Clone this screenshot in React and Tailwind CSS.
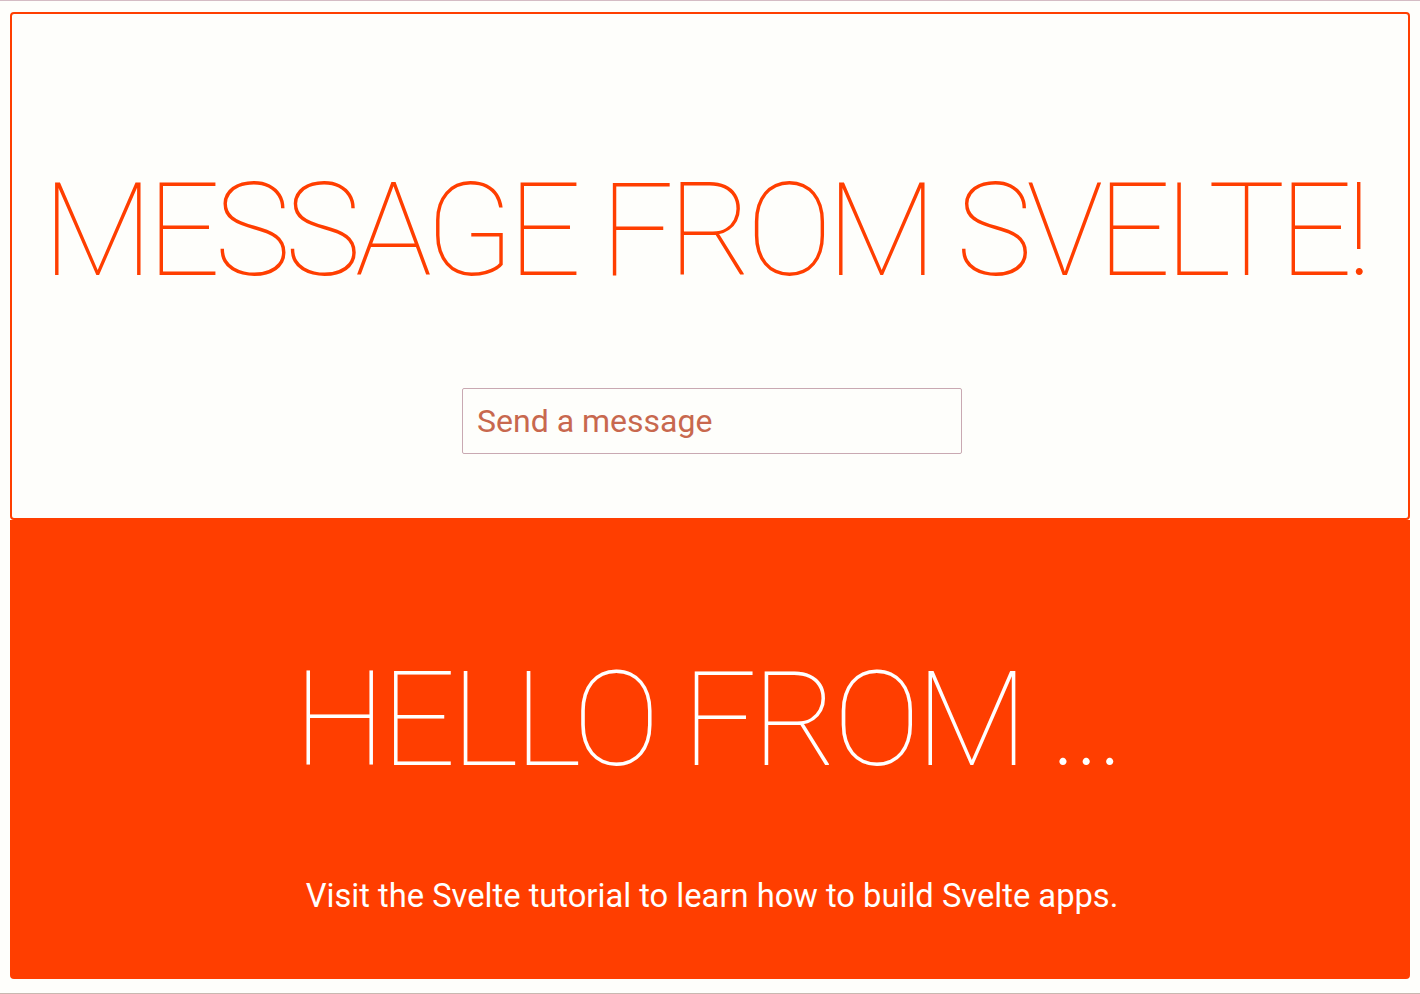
export default function App() {
    return (
        <div
            className="w-[1420px] h-[994px] bg-[#fefefb] border-t border-b border-t-[#d4bcc4] border-b-[#c8b8b0] px-[10px] pt-[11px] flex flex-col"
            style={{ fontFamily: 'Roboto, "Liberation Sans", sans-serif' }}
        >
            <div className="h-[508px] border-2 border-[#ff3e00] rounded-[4px] flex flex-col items-center">
                <h1 className="mt-[152px] -ml-[12px] text-[129px] leading-none font-thin tracking-[-6px] text-[#ff3e00] uppercase whitespace-nowrap">
                    Message from Svelte!
                </h1>
                <input
                    type="text"
                    placeholder="Send a message"
                    className="mt-[93px] ml-[4px] w-[500px] h-[66px] border border-[#c9a9b2] rounded-[2px] px-[14px] text-[32px] bg-transparent outline-none placeholder:text-[#c8684e]"
                />
            </div>
            <div className="h-[459px] bg-[#ff3e00] rounded-b-[4px] flex flex-col items-center">
                <h2 className="mt-[135px] -ml-[6px] text-[131px] leading-none font-thin tracking-[-4.7px] text-white uppercase whitespace-nowrap">
                    Hello from ...
                </h2>
                <p className="mt-[86px] ml-[4px] text-[32.7px] text-white">
                    Visit the Svelte tutorial to learn how to build Svelte apps.
                </p>
            </div>
        </div>
    );
}
